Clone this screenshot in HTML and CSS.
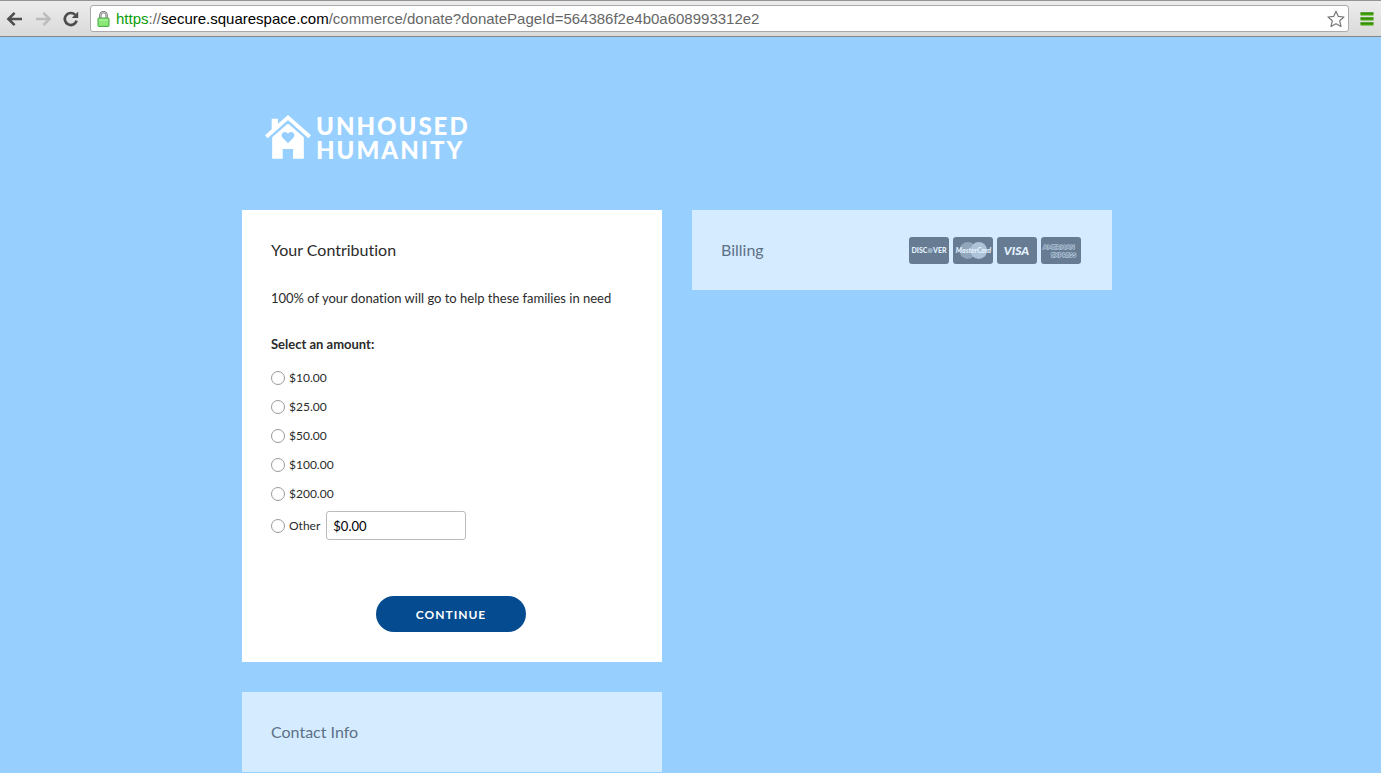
FILE: index.html
```html
<!DOCTYPE html>
<html lang="en">
<head>
<meta charset="utf-8">
<meta name="viewport" content="width=device-width, initial-scale=1">
<title>Donate - Unhoused Humanity</title>
<link rel="stylesheet" href="styles.css">
</head>
<body>
<header class="toolbar">
  <nav class="nav-buttons" aria-label="Browser">
    <button class="icon-button" type="button" aria-label="Back">
      <svg width="18" height="16" viewBox="0 0 18 16" fill="none" stroke="#4d4d4d" stroke-width="2.6"><path d="M2.4 8H16M8.6 1.8L2.4 8l6.2 6.2"/></svg>
    </button>
    <button class="icon-button" type="button" aria-label="Forward">
      <svg width="18" height="16" viewBox="0 0 18 16" fill="none" stroke="#bcbcbc" stroke-width="2.6"><path d="M15.6 8H2M9.4 1.8L15.6 8l-6.2 6.2"/></svg>
    </button>
    <button class="icon-button" type="button" aria-label="Reload">
      <svg width="18" height="16" viewBox="0 0 18 16"><path d="M13.2 3.9A6 6 0 1 0 14.6 9.6" fill="none" stroke="#4d4d4d" stroke-width="2.7"/><path d="M16.2 0.6V7H9.8z" fill="#4d4d4d"/></svg>
    </button>
  </nav>
  <div class="address">
    <svg class="lock" width="13" height="16" viewBox="0 0 13 16"><path d="M3.3 8V4.6a3.2 3.5 0 0 1 6.4 0V8" fill="none" stroke="#777" stroke-width="2.4"/><path d="M3.3 8V4.6a3.2 3.5 0 0 1 6.4 0V8" fill="none" stroke="#ddd" stroke-width="0.8"/><rect x="1" y="7" width="11" height="8.4" rx="0.8" fill="#8be878" stroke="#43a53b"/><path d="M2 9h9" stroke="#b9f5ac"/></svg>
    <div class="url" role="textbox" aria-label="Address" contenteditable="true" spellcheck="false"><span class="url-scheme">https</span>://<span class="url-host">secure.squarespace.com</span>/commerce/donate?donatePageId=564386f2e4b0a608993312e2</div>
    <button class="icon-button" type="button" aria-label="Bookmark this page">
      <svg width="18" height="18" viewBox="0 0 18 18"><path d="M9 1.2l2.3 5.2 5.7.6-4.3 3.8 1.3 5.8L9 13.7l-5 2.9 1.3-5.8L1 7l5.7-.6z" fill="#fff" stroke="#777" stroke-width="1.2" stroke-linejoin="round"/></svg>
    </button>
  </div>
  <button class="icon-button menu" type="button" aria-label="Menu">
    <svg width="14" height="14" viewBox="0 0 14 14"><path d="M0.5 2h13M0.5 7h13M0.5 12h13" stroke="#43a508" stroke-width="3"/><path d="M0.5 1h13M0.5 6h13M0.5 11h13" stroke="#287d08"/></svg>
  </button>
</header>

<main class="page">
  <a class="logo" href="#" aria-label="Unhoused Humanity">
    <svg width="46" height="46" viewBox="0 0 48 46"><path d="M1.3 22.7L24 2.8l22.7 19.9" fill="none" stroke="#fff" stroke-width="4"/><path d="M7 4h6.5v7L7 17z" fill="#fff"/><path fill="#fff" fill-rule="evenodd" d="M24 8.8l16.5 14.4V45.6H29.3V35.5H18.5v10.1H7.5V23.2zM24 29.4l5.6-5.5c3.5-3.9-2.4-8.6-5.6-4.3-3.2-4.3-9.1.4-5.6 4.3z"/></svg>
    <span class="logo-text"><span>UNHOUSED</span><span>HUMANITY</span></span>
  </a>

  <div class="columns">
    <div class="column">
      <form class="panel contribution">
        <h2 class="title">Your Contribution</h2>
        <p class="note">100% of your donation will go to help these families in need</p>
        <fieldset class="amounts">
          <legend class="legend">Select an amount:</legend>
          <label class="choice"><input class="radio" type="radio" name="amount" value="10">$10.00</label>
          <label class="choice"><input class="radio" type="radio" name="amount" value="25">$25.00</label>
          <label class="choice"><input class="radio" type="radio" name="amount" value="50">$50.00</label>
          <label class="choice"><input class="radio" type="radio" name="amount" value="100">$100.00</label>
          <label class="choice"><input class="radio" type="radio" name="amount" value="200">$200.00</label>
          <div class="other">
            <label class="choice"><input class="radio" type="radio" name="amount" value="other">Other</label>
            <input class="other-amount" type="text" value="$0.00" aria-label="Other amount">
          </div>
        </fieldset>
        <button class="continue" type="submit">CONTINUE</button>
      </form>
      <section class="panel inactive">
        <h2 class="title">Contact Info</h2>
      </section>
    </div>
    <div class="column">
      <section class="panel inactive">
        <h2 class="title">Billing</h2>
        <div class="cards">
          <svg class="card" viewBox="0 0 40 27" role="img" aria-label="Discover"><rect width="40" height="27" rx="3" fill="#677c92"/><text class="discover" x="2.5" y="16">DISC</text><circle cx="21.2" cy="13.5" r="2.6" fill="#9aafc3"/><text class="discover" x="24" y="16">VER</text></svg>
          <svg class="card" viewBox="0 0 40 27" role="img" aria-label="MasterCard"><rect width="40" height="27" rx="3" fill="#677c92"/><circle cx="14.8" cy="13.5" r="8.4" fill="#91a6ba"/><circle cx="25.8" cy="13.5" r="8.4" fill="#adc3d7"/><text class="mastercard" x="20.5" y="16">MasterCard</text></svg>
          <svg class="card" viewBox="0 0 40 27" role="img" aria-label="Visa"><rect width="40" height="27" rx="3" fill="#677c92"/><text class="visa" x="19.5" y="18">VISA</text></svg>
          <svg class="card" viewBox="0 0 40 27" role="img" aria-label="American Express"><rect width="40" height="27" rx="3" fill="#677c92"/><text class="amex" x="2" y="12">AMERICAN</text><text class="amex" x="10" y="19.5">EXPRESS</text></svg>
        </div>
      </section>
    </div>
  </div>
</main>
</body>
</html>
```
FILE: styles.css
```css
* {
  box-sizing: border-box;
}

body {
  margin: 0;
  min-height: 100vh;
  background: #97d0ff;
  color: #2b2b2b;
  font-family: Lato, "Liberation Sans", sans-serif;
  font-variant-ligatures: none;
}

button,
input {
  font: inherit;
}

svg {
  display: block;
}

/* Browser toolbar */
.toolbar {
  display: flex;
  align-items: center;
  height: 37px;
  padding: 0 7px 0 6px;
  border-top: 1px solid #969396;
  border-bottom: 1px solid #858585;
  background: linear-gradient(#ececec, #dadada);
}

.nav-buttons {
  display: flex;
  gap: 10px;
  margin-right: 10px;
}

.icon-button {
  padding: 0;
  border: 0;
  background: none;
}

.address {
  display: flex;
  flex: 1;
  align-items: center;
  height: 27px;
  padding: 0 3px 0 6px;
  border: 1px solid #aaa;
  border-radius: 3px;
  background: #fff;
}

.url {
  flex: 1;
  margin-left: 6px;
  color: #666;
  font: 15px/20px "Liberation Sans", Arial, sans-serif;
  white-space: nowrap;
}

.url-scheme {
  color: #0a9d0a;
}

.url-host {
  color: #000;
}

.menu {
  margin-left: 11px;
}

/* Donation page */
.page {
  max-width: 897px;
  margin: 0 auto;
  padding: 77px 27px 0 0;
}

.logo {
  display: flex;
  gap: 5px;
  width: max-content;
  margin-left: 23px;
  color: #fff;
  text-decoration: none;
}

.logo-text {
  display: flex;
  flex-direction: column;
  font-size: 24px;
  font-weight: 900;
  line-height: 24px;
  letter-spacing: 2px;
}

.columns {
  display: grid;
  grid-template-columns: 1fr 1fr;
  gap: 30px;
  margin-top: 48px;
}

.column {
  display: flex;
  flex-direction: column;
  gap: 30px;
}

.panel {
  padding: 30px 31px 30px 29px;
  background: #fff;
}

.title {
  margin: 0;
  font-size: 16px;
  font-weight: 400;
  line-height: 20px;
}

.inactive {
  display: flex;
  align-items: center;
  justify-content: space-between;
  height: 80px;
  background: #d5ebff;
  color: #5d7187;
}

.note {
  margin: 28px 0;
  font-size: 13px;
  line-height: 20px;
}

.amounts {
  margin: 0;
  padding: 0;
  border: 0;
}

.legend {
  padding: 0;
  margin-bottom: 11px;
  font-size: 13px;
  font-weight: 700;
  line-height: 16px;
}

.choice {
  display: flex;
  align-items: center;
  gap: 4px;
  height: 29px;
  font-size: 12px;
}

.radio {
  appearance: none;
  width: 14px;
  height: 14px;
  margin: 0;
  border: 1px solid #999;
  border-radius: 50%;
  background: #fff;
}

.radio:checked {
  background: radial-gradient(#444 3px, #fff 4px);
}

.other {
  display: flex;
  align-items: center;
  gap: 6px;
  margin-top: 3px;
}

.other-amount {
  width: 140px;
  height: 29px;
  padding: 0 6px;
  border: 1px solid #bbb;
  border-radius: 3px;
  background: #fff;
  color: #000;
  font-size: 13px;
}

.continue {
  display: block;
  width: 150px;
  height: 36px;
  margin: 56px auto 0;
  border: 0;
  border-radius: 18px;
  background: #054b8f;
  color: #fff;
  font-size: 12px;
  font-weight: 700;
  letter-spacing: 1px;
}

.cards {
  display: flex;
  gap: 4px;
}

.card {
  width: 40px;
  height: 27px;
}

.card text {
  fill: #e3f1ff;
  font-family: Lato, sans-serif;
}

.discover {
  font-size: 7px;
  font-weight: 900;
}

.mastercard {
  font-size: 7px;
  font-style: italic;
  font-weight: 900;
  text-anchor: middle;
}

.visa {
  font-size: 12px;
  font-style: italic;
  font-weight: 900;
  text-anchor: middle;
}

.card .amex {
  fill: #677c92;
  stroke: #c3d8eb;
  stroke-width: 1px;
  paint-order: stroke;
  font-size: 6px;
  font-weight: 700;
}
```
